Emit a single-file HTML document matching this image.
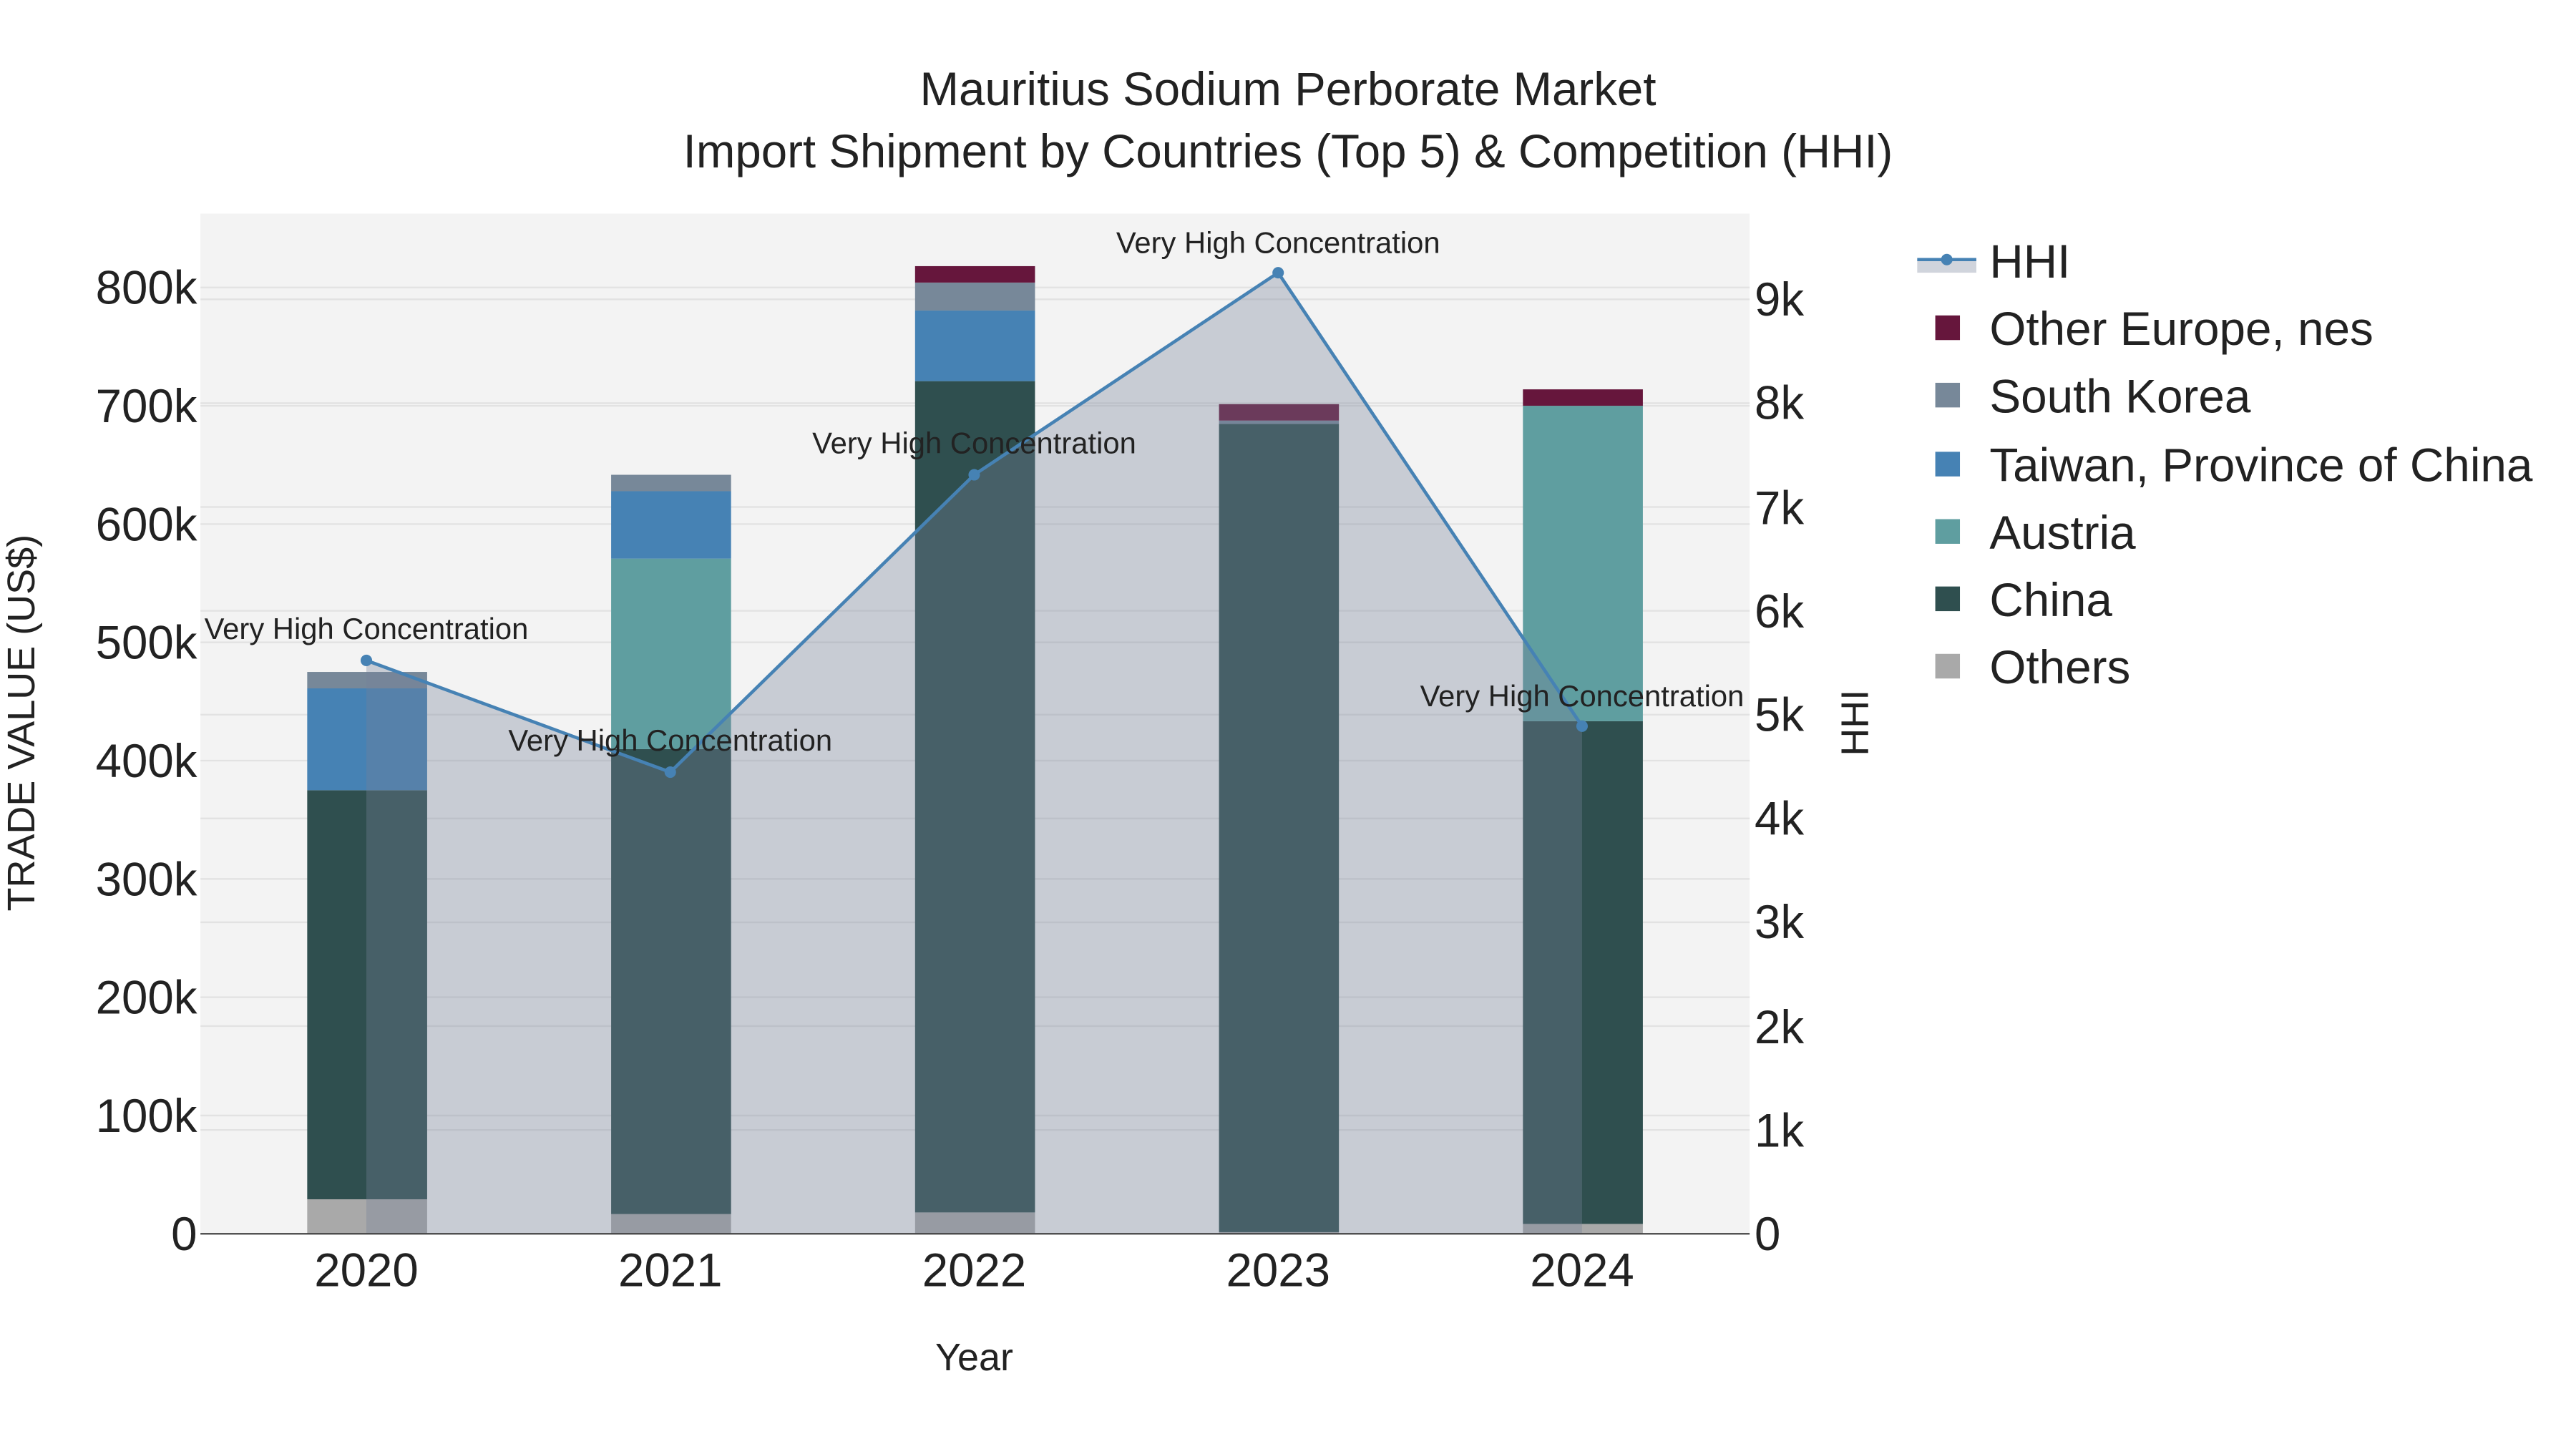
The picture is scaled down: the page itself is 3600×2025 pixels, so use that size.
<!DOCTYPE html>
<html><head><meta charset="utf-8"><style>html,body{margin:0;padding:0;background:#fff}svg{display:block}text{font-family:"Liberation Sans",sans-serif;fill:#222}</style></head><body>
<svg width="3600" height="2025" viewBox="0 0 1568 882" xmlns="http://www.w3.org/2000/svg">
<rect x="0" y="0" width="1568" height="882" fill="#fff"/>
<rect x="122" y="130" width="943" height="621" fill="#f3f3f3"/>
<g stroke="#e2e2e2" stroke-width="1">
<line x1="122" x2="1065" y1="679" y2="679"/><line x1="122" x2="1065" y1="607" y2="607"/><line x1="122" x2="1065" y1="535" y2="535"/><line x1="122" x2="1065" y1="463" y2="463"/><line x1="122" x2="1065" y1="391" y2="391"/><line x1="122" x2="1065" y1="319" y2="319"/><line x1="122" x2="1065" y1="247" y2="247"/><line x1="122" x2="1065" y1="175" y2="175"/>
<line x1="122" x2="1065" y1="687.8" y2="687.8"/><line x1="122" x2="1065" y1="624.6" y2="624.6"/><line x1="122" x2="1065" y1="561.4" y2="561.4"/><line x1="122" x2="1065" y1="498.2" y2="498.2"/><line x1="122" x2="1065" y1="435" y2="435"/><line x1="122" x2="1065" y1="371.8" y2="371.8"/><line x1="122" x2="1065" y1="308.6" y2="308.6"/><line x1="122" x2="1065" y1="245.4" y2="245.4"/><line x1="122" x2="1065" y1="182.2" y2="182.2"/>
</g>
<g>
<rect x="187" y="730" width="73" height="21" fill="#a9a9a9"/><rect x="187" y="481" width="73" height="249" fill="#2f4f4f"/><rect x="187" y="419" width="73" height="62" fill="#4682b4"/><rect x="187" y="409" width="73" height="10" fill="#778899"/>
<rect x="372" y="739" width="73" height="12" fill="#a9a9a9"/><rect x="372" y="456" width="73" height="283" fill="#2f4f4f"/><rect x="372" y="340" width="73" height="116" fill="#5f9ea0"/><rect x="372" y="299" width="73" height="41" fill="#4682b4"/><rect x="372" y="289" width="73" height="10" fill="#778899"/>
<rect x="557" y="738" width="73" height="13" fill="#a9a9a9"/><rect x="557" y="232" width="73" height="506" fill="#2f4f4f"/><rect x="557" y="189" width="73" height="43" fill="#4682b4"/><rect x="557" y="172" width="73" height="17" fill="#778899"/><rect x="557" y="162" width="73" height="10" fill="#66163c"/>
<rect x="742" y="750" width="73" height="1" fill="#a9a9a9"/><rect x="742" y="258" width="73" height="492" fill="#2f4f4f"/><rect x="742" y="256" width="73" height="2" fill="#778899"/><rect x="742" y="246" width="73" height="10" fill="#66163c"/>
<rect x="927" y="745" width="73" height="6" fill="#a9a9a9"/><rect x="927" y="439" width="73" height="306" fill="#2f4f4f"/><rect x="927" y="247" width="73" height="192" fill="#5f9ea0"/><rect x="927" y="237" width="73" height="10" fill="#66163c"/>
</g>
<polygon points="223,751 223,402 408,470 593,289 778,166 963,442 963,751" fill="rgba(118,130,151,0.34)"/>
<polyline points="223,402 408,470 593,289 778,166 963,442" fill="none" stroke="#4682b4" stroke-width="2"/>
<g fill="#4682b4"><circle cx="223" cy="402" r="3.5"/><circle cx="408" cy="470" r="3.5"/><circle cx="593" cy="289" r="3.5"/><circle cx="778" cy="166" r="3.5"/><circle cx="963" cy="442" r="3.5"/></g>
<line x1="122" x2="1065" y1="751" y2="751" stroke="#444" stroke-width="1"/>
<g font-size="18.2" text-anchor="middle">
<text x="223" y="389">Very High Concentration</text><text x="408" y="457">Very High Concentration</text><text x="593" y="276">Very High Concentration</text><text x="778" y="154">Very High Concentration</text><text x="963" y="430">Very High Concentration</text>
</g>
<g font-size="28.5" text-anchor="middle">
<text x="784" y="64">Mauritius Sodium Perborate Market</text>
<text x="784" y="102">Import Shipment by Countries (Top 5) &amp; Competition (HHI)</text>
</g>
<g font-size="28.5" text-anchor="end">
<text x="120" y="761">0</text><text x="120" y="689">100k</text><text x="120" y="617">200k</text><text x="120" y="545">300k</text><text x="120" y="473">400k</text><text x="120" y="401">500k</text><text x="120" y="329">600k</text><text x="120" y="257">700k</text><text x="120" y="185">800k</text>
</g>
<g font-size="28.5">
<text x="1068" y="761">0</text><text x="1068" y="698">1k</text><text x="1068" y="635">2k</text><text x="1068" y="571">3k</text><text x="1068" y="508">4k</text><text x="1068" y="445">5k</text><text x="1068" y="382">6k</text><text x="1068" y="319">7k</text><text x="1068" y="255">8k</text><text x="1068" y="192">9k</text>
</g>
<g font-size="28.5" text-anchor="middle">
<text x="223" y="783">2020</text><text x="408" y="783">2021</text><text x="593" y="783">2022</text><text x="778" y="783">2023</text><text x="963" y="783">2024</text>
</g>
<text x="593" y="834" font-size="23.5" text-anchor="middle">Year</text>
<text transform="translate(21,440) rotate(-90)" font-size="23.5" text-anchor="middle">TRADE VALUE (US$)</text>
<text transform="translate(1137,440) rotate(-90)" font-size="23.5" text-anchor="middle">HHI</text>
<rect x="1167" y="158" width="36" height="8" fill="rgba(118,130,151,0.34)"/>
<line x1="1167" x2="1203" y1="158" y2="158" stroke="#4682b4" stroke-width="2"/><circle cx="1185" cy="158" r="3.5" fill="#4682b4"/>
<rect x="1178" y="192" width="15" height="15" fill="#66163c"/>
<rect x="1178" y="233" width="15" height="15" fill="#778899"/>
<rect x="1178" y="275" width="15" height="15" fill="#4682b4"/>
<rect x="1178" y="316" width="15" height="15" fill="#5f9ea0"/>
<rect x="1178" y="357" width="15" height="15" fill="#2f4f4f"/>
<rect x="1178" y="398" width="15" height="15" fill="#a9a9a9"/>
<g font-size="28.6">
<text x="1211" y="169">HHI</text><text x="1211" y="210">Other Europe, nes</text><text x="1211" y="251">South Korea</text><text x="1211" y="293">Taiwan, Province of China</text><text x="1211" y="334">Austria</text><text x="1211" y="375">China</text><text x="1211" y="416">Others</text>
</g>
</svg>
</body></html>
